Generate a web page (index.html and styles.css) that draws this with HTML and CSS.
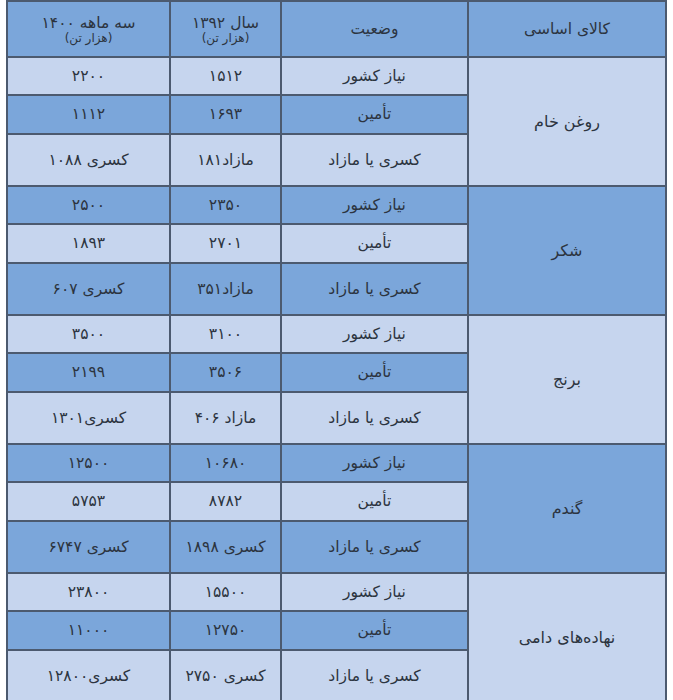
FILE: index.html
```html
<!DOCTYPE html>
<html lang="fa" dir="rtl">
<head>
<meta charset="utf-8">
<link rel="stylesheet" href="styles.css">
</head>
<body>
<table class="grid">
  <colgroup>
    <col class="c-item"><col class="c-status"><col class="c-y92"><col class="c-y00">
  </colgroup>
  <thead>
    <tr class="head dark">
      <th>کالای اساسی</th>
      <th>وضعیت</th>
      <th><span class="t1">سال ۱۳۹۲</span><span class="t2">(هزار تن)</span></th>
      <th><span class="t1">سه ماهه ۱۴۰۰</span><span class="t2">(هزار تن)</span></th>
    </tr>
  </thead>
  <tbody>
    <tr class="r1 light"><td rowspan="3" class="item light">روغن خام</td><td>نیاز کشور</td><td>۱۵۱۲</td><td>۲۲۰۰</td></tr>
    <tr class="r2 dark"><td>تأمین</td><td>۱۶۹۳</td><td>۱۱۱۲</td></tr>
    <tr class="r3 light"><td>کسری یا مازاد</td><td>مازاد۱۸۱</td><td>کسری ۱۰۸۸</td></tr>

    <tr class="r1 dark"><td rowspan="3" class="item dark">شکر</td><td>نیاز کشور</td><td>۲۳۵۰</td><td>۲۵۰۰</td></tr>
    <tr class="r2 light"><td>تأمین</td><td>۲۷۰۱</td><td>۱۸۹۳</td></tr>
    <tr class="r3 dark"><td>کسری یا مازاد</td><td>مازاد۳۵۱</td><td>کسری ۶۰۷</td></tr>

    <tr class="r1 light"><td rowspan="3" class="item light">برنج</td><td>نیاز کشور</td><td>۳۱۰۰</td><td>۳۵۰۰</td></tr>
    <tr class="r2 dark"><td>تأمین</td><td>۳۵۰۶</td><td>۲۱۹۹</td></tr>
    <tr class="r3 light"><td>کسری یا مازاد</td><td>مازاد ۴۰۶</td><td>کسری۱۳۰۱</td></tr>

    <tr class="r1 dark"><td rowspan="3" class="item dark">گندم</td><td>نیاز کشور</td><td>۱۰۶۸۰</td><td>۱۲۵۰۰</td></tr>
    <tr class="r2 light"><td>تأمین</td><td>۸۷۸۲</td><td>۵۷۵۳</td></tr>
    <tr class="r3 dark"><td>کسری یا مازاد</td><td>کسری ۱۸۹۸</td><td>کسری ۶۷۴۷</td></tr>

    <tr class="r1 light"><td rowspan="3" class="item light">نهاده‌های دامی</td><td>نیاز کشور</td><td>۱۵۵۰۰</td><td>۲۳۸۰۰</td></tr>
    <tr class="r2 dark"><td>تأمین</td><td>۱۲۷۵۰</td><td>۱۱۰۰۰</td></tr>
    <tr class="r3 light"><td>کسری یا مازاد</td><td>کسری ۲۷۵۰</td><td>کسری۱۲۸۰۰</td></tr>
  </tbody>
</table>
</body>
</html>
```
FILE: styles.css
```css
html, body {
  margin: 0;
  padding: 0;
  background: #ffffff;
}
body {
  font-family: "DejaVu Sans", "Noto Sans", sans-serif;
  color: #2c3440;
}
.grid {
  direction: rtl;
  margin: 0 6px 0 0;
  width: 659px;
  table-layout: fixed;
  border-collapse: collapse;
  border: 2px solid #4c5a6f;
}
.c-item { width: 198px; }
.c-status { width: 187px; }
.c-y92 { width: 111px; }
.c-y00 { width: 163px; }
.grid th, .grid td {
  border: 2px solid #4c5a6f;
  text-align: center;
  vertical-align: middle;
  padding: 0;
  font-size: 15.5px;
  font-weight: normal;
  line-height: 19px;
}
.dark td, .dark th { background: #7ba6da; }
.light td { background: #c6d5ee; }
td.item.dark { background: #7ba6da; }
td.item.light { background: #c6d5ee; }
.head { height: 56px; }
.r1 { height: 38px; }
.r2 { height: 39px; }
.r3 { height: 52px; }
.grid th .t1 { display: block; font-size: 15.5px; line-height: 18px; }
.grid th .t2 { display: block; font-size: 12px; line-height: 13px; }
.grid td.item { font-size: 16px; }
```
